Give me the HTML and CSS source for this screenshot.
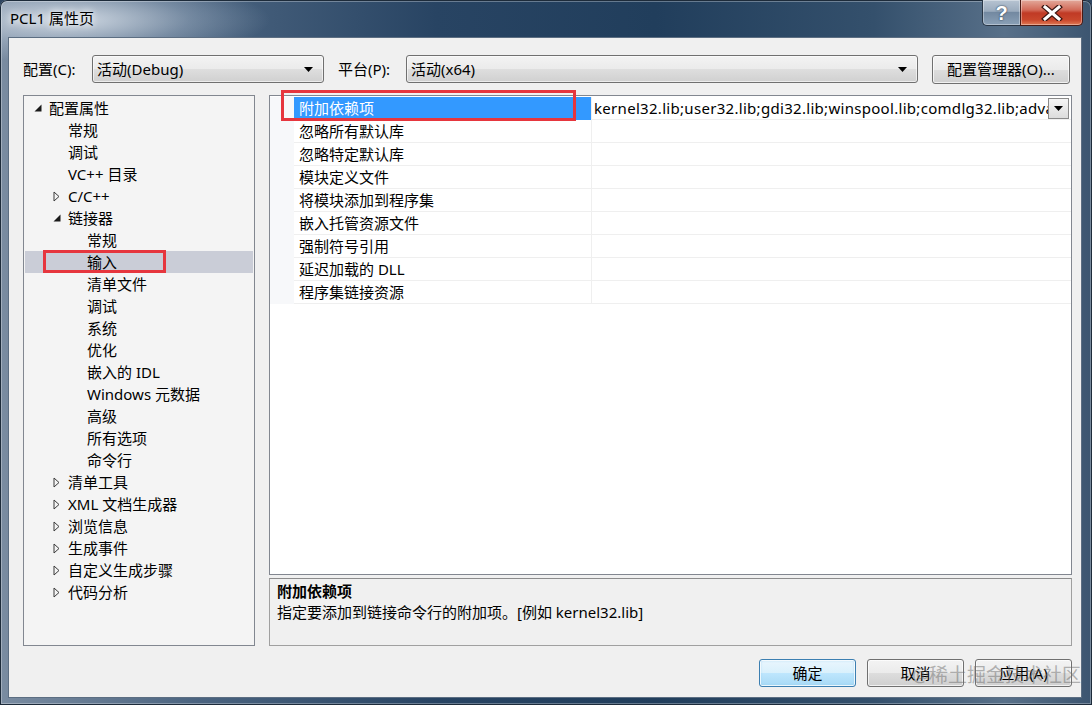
FILE: index.html
```html
<!DOCTYPE html>
<html lang="zh-CN">
<head>
<meta charset="utf-8">
<title>PCL1 属性页</title>
<link rel="stylesheet" href="styles.css">
</head>
<body>
<div class="window">
  <div class="titlebar">
    <span class="title">PCL1 属性页</span>
    <div class="caption-btns">
      <div class="cap cap-help"><span class="q">?</span></div>
      <div class="cap cap-close">
        <svg width="22" height="16" viewBox="0 0 22 16"><path d="M4 2 L18 14 M18 2 L4 14" stroke="#3a1410" stroke-width="5.5" stroke-linecap="square"/><path d="M4 2 L18 14 M18 2 L4 14" stroke="#ffffff" stroke-width="3" stroke-linecap="square"/></svg>
      </div>
    </div>
  </div>
  <div class="client">
    <div class="toolbar">
      <span class="lbl">配置(C):</span>
      <div class="combo combo-config"><span>活动(Debug)</span><svg class="arr" width="9" height="5" viewBox="0 0 9 5"><path d="M0 0 H9 L4.5 5 Z" fill="#000"/></svg></div>
      <span class="lbl lbl2">平台(P):</span>
      <div class="combo combo-platform"><span>活动(x64)</span><svg class="arr" width="9" height="5" viewBox="0 0 9 5"><path d="M0 0 H9 L4.5 5 Z" fill="#000"/></svg></div>
      <div class="btn btn-mgr">配置管理器(O)...</div>
    </div>
    <div class="main">
      <div class="tree">
        <div class="node l0"><span class="tw"><svg width="8" height="8" viewBox="0 0 8 8"><path d="M7.5 0.5 V7.5 H0.5 Z" fill="#1a1a1a"/></svg></span>配置属性</div>
        <div class="node l1"><span class="tw"></span>常规</div>
        <div class="node l1"><span class="tw"></span>调试</div>
        <div class="node l1"><span class="tw"></span>VC++ 目录</div>
        <div class="node l1"><span class="tw"><svg width="7" height="11" viewBox="0 0 7 11"><path d="M1 1 L6 5.5 L1 10 Z" fill="none" stroke="#3a3a3a" stroke-width="1"/></svg></span>C/C++</div>
        <div class="node l1"><span class="tw"><svg width="8" height="8" viewBox="0 0 8 8"><path d="M7.5 0.5 V7.5 H0.5 Z" fill="#1a1a1a"/></svg></span>链接器</div>
        <div class="node l2"><span class="tw"></span>常规</div>
        <div class="node l2 sel"><span class="tw"></span>输入</div>
        <div class="node l2"><span class="tw"></span>清单文件</div>
        <div class="node l2"><span class="tw"></span>调试</div>
        <div class="node l2"><span class="tw"></span>系统</div>
        <div class="node l2"><span class="tw"></span>优化</div>
        <div class="node l2"><span class="tw"></span>嵌入的 IDL</div>
        <div class="node l2"><span class="tw"></span>Windows 元数据</div>
        <div class="node l2"><span class="tw"></span>高级</div>
        <div class="node l2"><span class="tw"></span>所有选项</div>
        <div class="node l2"><span class="tw"></span>命令行</div>
        <div class="node l1"><span class="tw"><svg width="7" height="11" viewBox="0 0 7 11"><path d="M1 1 L6 5.5 L1 10 Z" fill="none" stroke="#3a3a3a" stroke-width="1"/></svg></span>清单工具</div>
        <div class="node l1"><span class="tw"><svg width="7" height="11" viewBox="0 0 7 11"><path d="M1 1 L6 5.5 L1 10 Z" fill="none" stroke="#3a3a3a" stroke-width="1"/></svg></span>XML 文档生成器</div>
        <div class="node l1"><span class="tw"><svg width="7" height="11" viewBox="0 0 7 11"><path d="M1 1 L6 5.5 L1 10 Z" fill="none" stroke="#3a3a3a" stroke-width="1"/></svg></span>浏览信息</div>
        <div class="node l1"><span class="tw"><svg width="7" height="11" viewBox="0 0 7 11"><path d="M1 1 L6 5.5 L1 10 Z" fill="none" stroke="#3a3a3a" stroke-width="1"/></svg></span>生成事件</div>
        <div class="node l1"><span class="tw"><svg width="7" height="11" viewBox="0 0 7 11"><path d="M1 1 L6 5.5 L1 10 Z" fill="none" stroke="#3a3a3a" stroke-width="1"/></svg></span>自定义生成步骤</div>
        <div class="node l1"><span class="tw"><svg width="7" height="11" viewBox="0 0 7 11"><path d="M1 1 L6 5.5 L1 10 Z" fill="none" stroke="#3a3a3a" stroke-width="1"/></svg></span>代码分析</div>
      </div>
      <div class="right">
        <div class="grid">
          <div class="grow">
            <div class="gut"></div>
            <div class="gname gsel">附加依赖项</div>
            <div class="gval"><span class="vtext">kernel32.lib;user32.lib;gdi32.lib;winspool.lib;comdlg32.lib;advapi32.lib;shell32.lib;ole32.lib</span><div class="ddbtn"><svg width="9" height="5" viewBox="0 0 9 5"><path d="M0 0 H9 L4.5 5 Z" fill="#000"/></svg></div></div>
          </div>
          <div class="grow"><div class="gut"></div><div class="gname">忽略所有默认库</div><div class="gval"></div></div>
          <div class="grow"><div class="gut"></div><div class="gname">忽略特定默认库</div><div class="gval"></div></div>
          <div class="grow"><div class="gut"></div><div class="gname">模块定义文件</div><div class="gval"></div></div>
          <div class="grow"><div class="gut"></div><div class="gname">将模块添加到程序集</div><div class="gval"></div></div>
          <div class="grow"><div class="gut"></div><div class="gname">嵌入托管资源文件</div><div class="gval"></div></div>
          <div class="grow"><div class="gut"></div><div class="gname">强制符号引用</div><div class="gval"></div></div>
          <div class="grow"><div class="gut"></div><div class="gname">延迟加载的 DLL</div><div class="gval"></div></div>
          <div class="grow"><div class="gut"></div><div class="gname">程序集链接资源</div><div class="gval"></div></div>
        </div>
        <div class="desc">
          <div class="desc-title">附加依赖项</div>
          <div class="desc-text">指定要添加到链接命令行的附加项。[例如 kernel32.lib]</div>
        </div>
      </div>
    </div>
    <div class="footer">
      <div class="btn btn-foot btn-default">确定</div>
      <div class="btn btn-foot">取消</div>
      <div class="btn btn-foot">应用(A)</div>
    </div>
  </div>
  <div class="mark mark-tree"></div>
  <div class="mark mark-grid"></div>
  <div class="watermark">@稀土掘金技术社区</div>
</div>
</body>
</html>
```

FILE: styles.css
```css
html, body {
  margin: 0;
  padding: 0;
  background: #2e4560;
}
body {
  width: 1092px;
  height: 705px;
  overflow: hidden;
  font-family: "Noto Sans", "Noto Sans CJK SC", sans-serif;
  font-size: 15px;
  color: #000;
}
.window {
  position: relative;
  width: 1092px;
  height: 705px;
  box-sizing: border-box;
  padding: 0 10px 8px 8px;
  display: flex;
  flex-direction: column;
  border-radius: 7px 7px 0 0;
  background:
    radial-gradient(ellipse 200px 42px at 70px 20px, rgba(225,232,240,0.85), rgba(190,204,220,0.35) 60%, rgba(160,180,200,0) 100%),
    linear-gradient(90deg, #7a8ca1 0%, #4b6480 18%, #284463 40%, #213e5c 60%, #34506c 80%, #587089 92%, #3c5570 100%);
  box-shadow: inset 0 0 0 1px #1d2b3a, inset 0 0 0 2px rgba(255,255,255,0.3);
}
.titlebar {
  height: 37px;
  flex: none;
  display: flex;
  align-items: flex-start;
}
.title {
  margin: 8px 0 0 2px;
  font-size: 15px;
  line-height: 20px;
  color: #000;
  text-shadow: 0 0 6px rgba(255,255,255,0.9), 0 0 10px rgba(255,255,255,0.8);
}
.caption-btns {
  margin-left: auto;
  margin-right: -1px;
  display: flex;
  height: 26px;
}
.cap {
  height: 26px;
  box-sizing: border-box;
  border: 1px solid #2a3848;
  border-top: none;
  display: flex;
  align-items: center;
  justify-content: center;
  box-shadow: inset 0 0 0 1px rgba(255,255,255,0.35);
}
.cap-help {
  width: 38px;
  border-radius: 0 0 0 5px;
  border-right: none;
  background: linear-gradient(180deg, #b7c4d2 0%, #9aabbd 45%, #7389a1 50%, #8aa0b6 100%);
}
.q {
  font-family: "Liberation Sans", sans-serif;
  font-weight: bold;
  font-size: 20px;
  line-height: 20px;
  color: #fff;
  text-shadow: 0 0 2px #33475c, 0 0 1px #33475c;
}
.cap-close {
  width: 63px;
  border-radius: 0 0 5px 0;
  border-color: #4a1a14;
  background: linear-gradient(180deg, #e3a99b 0%, #d26a58 40%, #c03a25 52%, #c9472c 80%, #e07a55 100%);
}
.client {
  flex: 1;
  display: flex;
  flex-direction: column;
  background: #f0f0f0;
  border: 1px solid #5c6e82;
  padding: 17px 9px 10px 14px;
}
.toolbar {
  display: flex;
  align-items: center;
  height: 28px;
  margin: 0 2px 12px 0;
}
.lbl {
  width: 69px;
  flex: none;
  line-height: 20px;
}
.lbl2 {
  margin-left: 14px;
  width: 68px;
}
.combo {
  height: 28px;
  box-sizing: border-box;
  border: 1px solid #707070;
  border-radius: 3px;
  background: linear-gradient(180deg, #f3f3f3 0%, #ebebeb 50%, #dedede 51%, #d0d0d0 100%);
  display: flex;
  align-items: center;
  padding: 0 10px 0 4px;
  box-shadow: inset 0 0 0 1px rgba(255,255,255,0.6);
}
.combo span { flex: 1; line-height: 20px; }
.combo-config { width: 232px; }
.combo-platform { width: 512px; }
.btn {
  box-sizing: border-box;
  border: 1px solid #707070;
  border-radius: 3px;
  background: linear-gradient(180deg, #f3f3f3 0%, #ebebeb 50%, #dddddd 51%, #cfcfcf 100%);
  box-shadow: inset 0 0 0 1px rgba(255,255,255,0.7);
  display: flex;
  align-items: center;
  justify-content: center;
  line-height: 20px;
}
.btn-mgr {
  margin-left: auto;
  width: 138px;
  height: 29px;
}
.main {
  display: flex;
  gap: 14px;
  height: 551px;
  flex: none;
}
.tree {
  width: 232px;
  box-sizing: border-box;
  border: 1px solid #828790;
  background: #f4f4f4;
  padding: 1px 0 0 0;
}
.node {
  height: 22px;
  display: flex;
  align-items: center;
  line-height: 22px;
  white-space: nowrap;
}
.node.l0 { padding-left: 10px; }
.node.l1 { padding-left: 29px; }
.node.l2 { padding-left: 48px; }
.node.sel { background: #cacdd7; margin: 0 1px; padding-left: 47px; }
.tw {
  width: 15px;
  flex: none;
  display: flex;
  align-items: center;
}
.right {
  width: 803px;
  display: flex;
  flex-direction: column;
  gap: 3px;
}
.grid {
  height: 480px;
  box-sizing: border-box;
  border: 1px solid #828790;
  background: #fff;
  padding-top: 1px;
}
.grow {
  display: grid;
  grid-template-columns: 24px 297px 1fr;
  height: 23px;
}
.gut {
  background: #f7f8fa;
}
.gname {
  padding-left: 5px;
  line-height: 22px;
  border-bottom: 1px solid #efefef;
  white-space: nowrap;
}
.gsel {
  background: #3399ff;
  color: #fff;
  border-bottom-color: #3399ff;
}
.gval {
  border-left: 1px solid #efefef;
  border-bottom: 1px solid #efefef;
  display: flex;
  align-items: center;
  overflow: hidden;
  padding-left: 2px;
  padding-right: 2px;
}
.vtext {
  flex: 1;
  overflow: hidden;
  white-space: nowrap;
  line-height: 22px;
  letter-spacing: 0.3px;
}
.ddbtn {
  flex: none;
  width: 21px;
  height: 21px;
  box-sizing: border-box;
  border: 1px solid #8a8a8a;
  background: linear-gradient(180deg, #f6f6f6, #dcdcdc);
  display: flex;
  align-items: center;
  justify-content: center;
}
.desc {
  flex: 1;
  box-sizing: border-box;
  border: 1px solid #a0a0a0;
  border-top-color: #8c8c8c;
  background: #f0f0f0;
  padding: 2px 7px;
}
.desc-title {
  font-weight: bold;
  line-height: 20px;
}
.desc-text {
  line-height: 22px;
}
.footer {
  display: flex;
  justify-content: flex-end;
  gap: 11px;
  margin-top: 13px;
}
.btn-foot {
  width: 97px;
  height: 28px;
}
.btn-default {
  border-color: #3c7fb1;
  background: linear-gradient(180deg, #eaf6fd 0%, #d9f0fc 50%, #bee6fd 51%, #a7d9f5 100%);
  box-shadow: inset 0 0 0 1px rgba(255,255,255,0.8), inset 0 0 3px #8cc8ee;
}
.mark {
  position: absolute;
  border: 3px solid #e6363e;
  box-sizing: border-box;
}
.mark-tree {
  left: 43px;
  top: 250px;
  width: 123px;
  height: 23px;
}
.mark-grid {
  left: 281px;
  top: 90px;
  width: 295px;
  height: 31px;
}
.watermark {
  position: absolute;
  left: 912px;
  top: 662px;
  font-size: 19px;
  line-height: 26px;
  color: rgba(110,110,110,0.5);
  white-space: nowrap;
}
```
